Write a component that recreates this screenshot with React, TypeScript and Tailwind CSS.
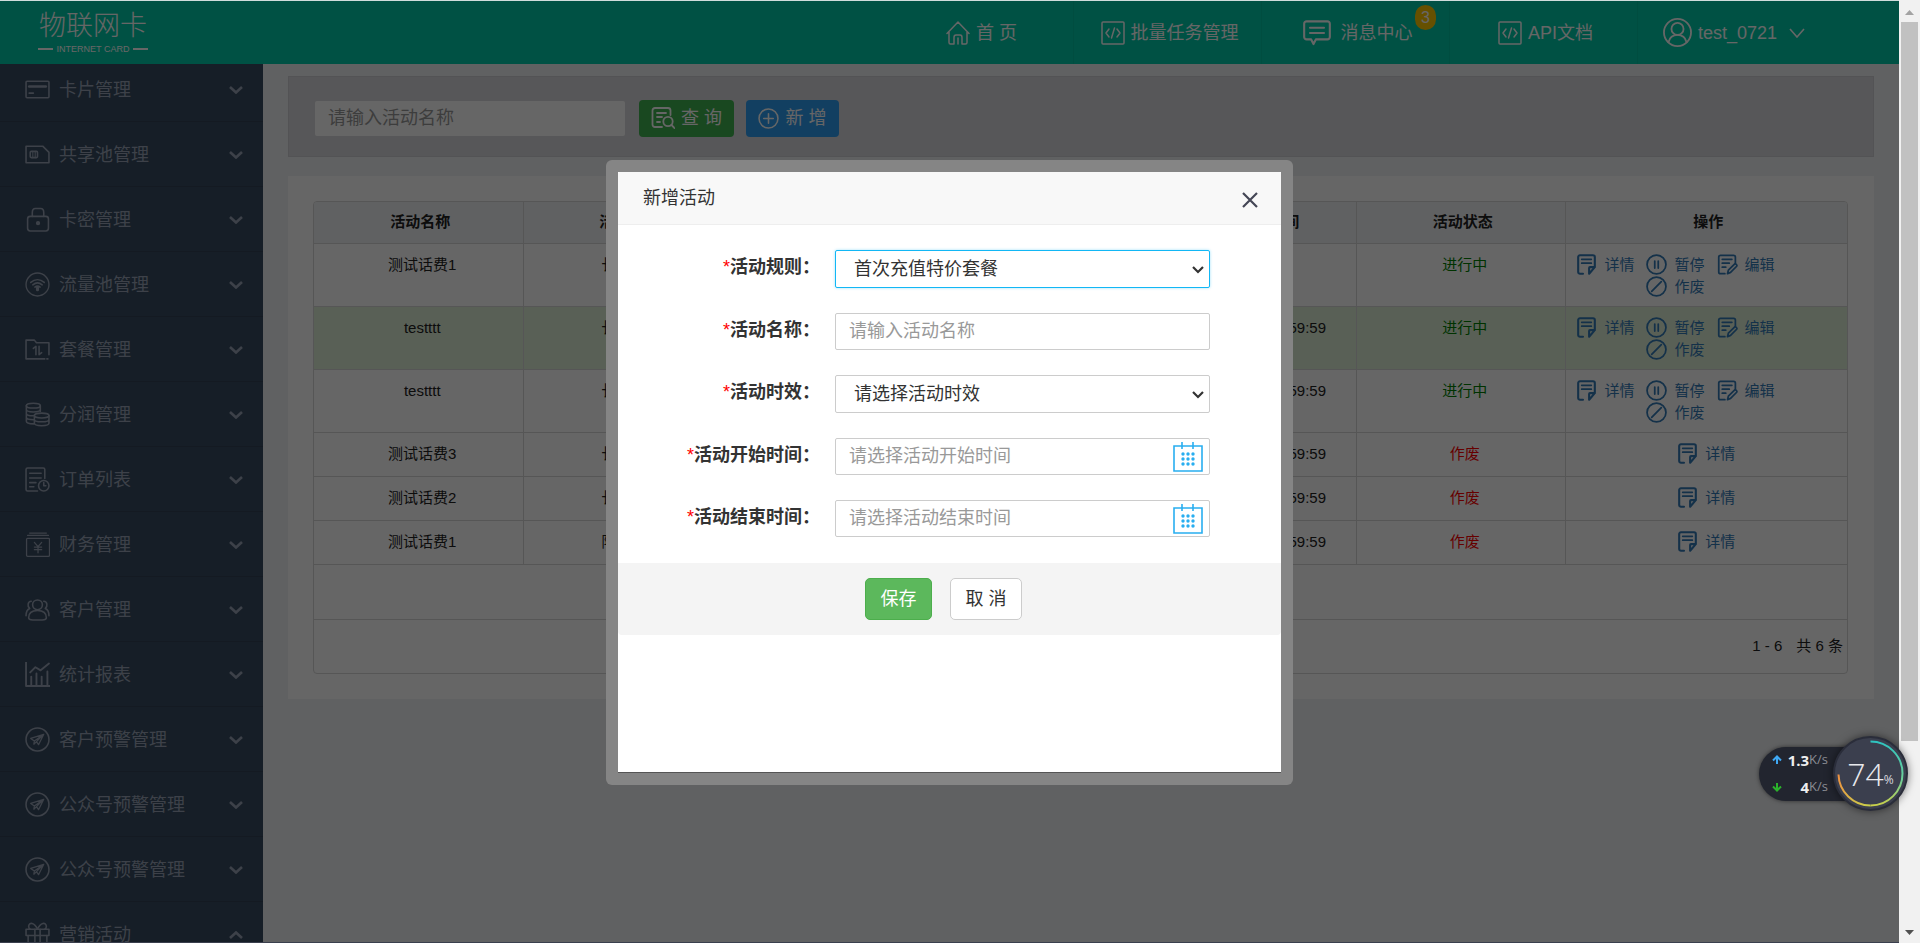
import type { ReactNode } from 'react'

const FONT = "font-['Liberation_Sans','Noto_Sans_CJK_SC',sans-serif]"

function Icon({ children, className = 'size-[25px]', width = 1.5 }: { children: ReactNode; className?: string; width?: number }) {
  return (
    <svg
      viewBox="0 0 24 24"
      fill="none"
      stroke="currentColor"
      strokeWidth={width}
      strokeLinecap="round"
      strokeLinejoin="round"
      aria-hidden="true"
      className={`shrink-0 ${className}`}
    >
      {children}
    </svg>
  )
}

const planeIcon = (
  <>
    <circle cx="12" cy="12" r="11" />
    <path d="M18 7 5.500 11l3.500 2.500L18 7l-5 10-2-3-2.500 2.500.5-3M11 14l7-7" strokeWidth="1.200" />
  </>
)

const menu: { label: string; icon: ReactNode; open?: boolean }[] = [
  {
    label: '卡片管理',
    icon: <><rect x="1" y="4" width="22" height="16" rx="1" /><path d="M4 9h16" strokeWidth="2.400" /><path d="M4 15.500h4" /></>,
  },
  {
    label: '共享池管理',
    icon: <><path d="M1 4h16l6 6v10H1z" /><rect x="5" y="9" width="7" height="6" rx="1" /><path d="M7.500 9v6M9.800 9v6" strokeWidth="1" /></>,
  },
  {
    label: '卡密管理',
    icon: <><rect x="2.500" y="9" width="20" height="14" rx="2.500" /><path d="M7 9V5.500C7 3 8 1.500 10 1.500h5c2 0 3 1.500 3 4V9" /><circle cx="12.500" cy="15.500" r="1.300" fill="currentColor" /></>,
  },
  {
    label: '流量池管理',
    icon: <><circle cx="12" cy="12" r="11" strokeWidth="1.300" /><path d="M5.500 10c4-3.500 9-3.500 13 0M7.500 12.300c3-2.500 6-2.500 9 0M9.500 14.500c1.700-1.300 3.300-1.300 5 0" /><path d="M12 15v2" strokeWidth="3" /></>,
  },
  {
    label: '套餐管理',
    icon: <><path d="M19 21H1V3h8l2 2.500h12V17" /><path d="M8 11l2.500-2v8M13.500 9v8l2.500-2M21 21h1" /></>,
  },
  {
    label: '分润管理',
    icon: <><ellipse cx="8" cy="3.500" rx="6.700" ry="2.300" /><path d="M1.300 3.500v15c0 1.500 3 2.500 7 2.500M14.700 3.500V9M1.300 7.300c0 3 13.400 3 13.400 0M1.300 11c0 2 4 2.500 7.500 2M1.300 14.700c0 1.500 3 2.300 7 2.300" /><ellipse cx="16" cy="13" rx="7" ry="2.300" /><path d="M9 13v7.500c0 3 14 3 14 0V13M9 16.700c0 3 14 3 14 0" /></>,
  },
  {
    label: '订单列表',
    icon: <><path d="M12 23H2.500c-1 0-1.500-.5-1.500-1.500v-19C1 1.500 1.500 1 2.500 1h15c1 0 1.500.5 1.500 1.500V11M4.500 6h11M4.500 10.500h11M4.500 15h6M4.500 19h4" /><circle cx="18" cy="18" r="5" /><path d="M18 15v3h2" /></>,
  },
  {
    label: '财务管理',
    icon: <><rect x="1.500" y="6" width="22" height="17.300" rx="1" strokeWidth="1.200" /><path d="M2.500 3.300h20M4.500 1h16M9 10l3.500 4L16 10M12.500 14v6M9 14.500h7M9 17h7" strokeWidth="1.200" /></>,
  },
  {
    label: '客户管理',
    icon: <><circle cx="12" cy="7.500" r="4.700" /><path d="M3.500 20c0-5 4-7 8.500-7s8.500 2 8.500 7c0 2-2 2-4 2h-9c-2 0-4 0-4-2z" /><path d="M6 4C2.500 4 2 9 4.500 11 2 12 1 14 1 18M18 4c3.500 0 4 5 1.500 7 2.500 1 3.500 3 3.500 7" /></>,
  },
  {
    label: '统计报表',
    icon: <path d="M1 0v23h23M6 22v-8M11 22V11M16 22v-8M21.500 22V9M5 10l5-5 5 3 8-6.500" strokeWidth="1.800" />,
  },
  { label: '客户预警管理', icon: planeIcon },
  { label: '公众号预警管理', icon: planeIcon },
  { label: '公众号预警管理', icon: planeIcon },
  {
    label: '营销活动',
    open: true,
    icon: <><rect x="1" y="7" width="22" height="6" /><path d="M3 13v10h18V13M9.500 7v16M14.500 7v16M12 7C9 0 4 0 3.500 4c0 1.500.5 2.500 1.500 3M12 7c3-7 8-7 8.500-3 0 1.500-.5 2.500-1.500 3" /></>,
  },
]

const codeIcon = (
  <>
    <rect x="1" y="1" width="22" height="22" rx="1" />
    <path d="M8 8l-3 4 3 4M16 8l3 4-3 4M13.500 7l-3 10" />
  </>
)

const detailIcon = (
  <>
    <path d="M8 22.500H4.500c-1 0-2-.7-2-2V3.500c0-1.300 1-2 2-2h15c1 0 2 .7 2 2V15l-6.500 7.500V16c0-.7.5-1 1-1h5.500" strokeWidth="2.400" />
    <path d="M6.500 6h11M6.500 10.500h11" />
  </>
)
const pauseIcon = (
  <>
    <circle cx="12" cy="12" r="10.800" />
    <path d="M10 8v8M14 8v8" />
  </>
)
const editIcon = (
  <>
    <path d="M9 22.500H4c-1 0-2-.7-2-2V3.500c0-1.300 1-2 2-2h15c1 0 2 .7 2 2V10M6 6h11M6 10.500h8M6 15h4" />
    <path d="M12 22.500l1-4 7-7c1-1 3.500 1 2.500 2.500l-7 7-3.500 1.500z" />
  </>
)
const voidIcon = (
  <>
    <circle cx="12" cy="12" r="10.800" />
    <path d="M6.500 17.500l11-11" />
  </>
)

const rows = [
  { name: '测试话费1', term: '长期有效', end: '', active: true },
  { name: 'testttt', term: '长期有效', end: '2021-07-31 23:59:59', active: true, selected: true },
  { name: 'testttt', term: '长期有效', end: '2021-07-31 23:59:59', active: true },
  { name: '测试话费3', term: '长期有效', end: '2021-07-31 23:59:59', active: false },
  { name: '测试话费2', term: '长期有效', end: '2021-07-31 23:59:59', active: false },
  { name: '测试话费1', term: '限时有效', end: '2021-07-31 23:59:59', active: false },
]

const columns = ['活动名称', '活动时效', '', '', '活动结束时间', '活动状态', '操作']

function NavItem({ icon, children }: { icon: ReactNode; children: ReactNode }) {
  return (
    <a href="#" className="relative flex h-full w-[188px] items-center justify-center gap-1.5 border-r border-[#00c0a1] pl-1 last:border-r-0">
      {icon}
      {children}
    </a>
  )
}

function Header() {
  return (
    <header className="flex h-[63px] shrink-0 items-center justify-between bg-[#00cbaa] pr-[73px] text-lg text-white">
      <div className="ml-[38px] flex w-[110px] flex-col items-center">
        <span className="text-[27px] leading-[32px] font-light whitespace-nowrap">物联网卡</span>
        <span className="flex w-full items-center justify-between text-[9px] leading-[14px]">
          <i className="h-0.5 w-[15px] bg-white" />
          INTERNET CARD
          <i className="h-0.5 w-[15px] bg-white" />
        </span>
      </div>
      <nav className="flex h-full">
        <NavItem icon={<Icon className="size-6"><path d="M1 12.500 12 1l11 11.500M3 11v10.500c0 1 .5 1.500 1.500 1.500H8v-6.500C8 14.500 9 14 10 14h4c1 0 2 .5 2 2.500V23h3.500c1 0 1.500-.5 1.500-1.500V11M12 17v6" /></Icon>}>
          首 页
        </NavItem>
        <NavItem icon={<Icon className="size-6">{codeIcon}</Icon>}>批量任务管理</NavItem>
        <NavItem
          icon={
            <Icon className="mr-1 size-7" width={1.800}>
              <path d="M3 2h18c1 0 2 1 2 2v11.500c0 1-1 2-2 2H11l-2 4-2-4H3c-1 0-2-1-2-2V4c0-1 1-2 2-2zM6 7.500h12M6 12h12" />
            </Icon>
          }
        >
          消息中心
          <span className="absolute top-1 right-[13px] flex h-[25px] w-[21px] items-center justify-center rounded-full bg-[#ffc800] text-base">3</span>
        </NavItem>
        <NavItem icon={<Icon className="size-6">{codeIcon}</Icon>}>API文档</NavItem>
        <NavItem
          icon={
            <Icon className="size-[29px]">
              <circle cx="12" cy="12" r="11.200" />
              <circle cx="12" cy="9" r="5" />
              <path d="M4.500 20c1-4 3-6 7.500-6s6.500 2 7.500 6" />
            </Icon>
          }
        >
          test_0721
          <svg viewBox="0 0 16 10" className="ml-1.5 h-2.5 w-4 shrink-0" fill="none" stroke="currentColor" strokeWidth="1.600" aria-hidden="true">
            <path d="M1 1l7 8 7-8" />
          </svg>
        </NavItem>
      </nav>
    </header>
  )
}

function Sidebar() {
  return (
    <aside className="w-[263px] shrink-0 overflow-hidden bg-[#394b61] text-lg text-[#98a4b6]">
      <ul className="-mt-[7px]">
        {menu.map((item, i) => (
          <li key={i}>
            <a href="#" className="flex h-[65px] items-center gap-[9px] border-b border-[#324256] pt-px pr-5 pl-[25px]">
              <Icon>{item.icon}</Icon>
              {item.label}
              <svg viewBox="0 0 14 8" className={`ml-auto h-2 w-3.5 ${item.open ? 'rotate-180' : ''}`} fill="none" stroke="currentColor" strokeWidth="2.600" aria-hidden="true">
                <path d="M1 1l6 5.500L13 1" />
              </svg>
            </a>
          </li>
        ))}
      </ul>
    </aside>
  )
}

function Action({ icon, label }: { icon: ReactNode; label: string }) {
  return (
    <a href="#" className="flex h-[22px] items-center gap-[7px] whitespace-nowrap text-[#337ab7]">
      <Icon className="size-[21px]" width={2}>{icon}</Icon>
      {label}
    </a>
  )
}

function ActivityTable() {
  return (
    <div className="overflow-hidden rounded border border-[#d6d6d6] text-[15px] leading-[22px] text-[#222]">
      <table className="w-full table-fixed border-collapse text-center">
        <thead className="bg-[#f0f2f6]">
          <tr className="h-[41px]">
            {columns.map((c, i) => (
              <th key={i} className={`border-r border-b border-[#d6d6d6] pl-1 last:border-r-0 ${i === 0 ? 'w-[209px]' : ''} ${i === 6 ? 'w-[282px]' : ''}`}>
                {c}
              </th>
            ))}
          </tr>
        </thead>
        <tbody>
          {rows.map((r, i) => (
            <tr
              key={i}
              className={`border-b border-[#d6d6d6] align-top *:border-r *:border-[#d6d6d6] *:pt-2.5 *:pl-2 *:last:border-r-0 *:last:pl-0 ${r.active ? 'h-[63px]' : 'h-11'} ${r.selected ? 'bg-[#dff0d8]' : ''}`}
            >
              <td>{r.name}</td>
              <td>{r.term}</td>
              <td />
              <td />
              <td>{r.end}</td>
              <td className={r.active ? 'text-[#008000]' : 'text-[#f00]'}>{r.active ? '进行中' : '作废'}</td>
              <td>
                {r.active ? (
                  <div className="ml-1.5 flex w-[208px] flex-wrap justify-center gap-x-3">
                    <Action icon={detailIcon} label="详情" />
                    <Action icon={pauseIcon} label="暂停" />
                    <Action icon={editIcon} label="编辑" />
                    <Action icon={voidIcon} label="作废" />
                  </div>
                ) : (
                  <div className="flex justify-center">
                    <Action icon={detailIcon} label="详情" />
                  </div>
                )}
              </td>
            </tr>
          ))}
        </tbody>
      </table>
      <div className="h-[55px] border-b border-[#d6d6d6]" />
      <div className="flex h-[53px] items-center justify-end gap-3.5 pr-1">
        <span>1 - 6</span>
        <span>共 6 条</span>
      </div>
    </div>
  )
}

function CalendarIcon() {
  return (
    <svg viewBox="0 0 30 30" className="pointer-events-none absolute top-1 right-[7px] size-[30px]" fill="none" stroke="#29aef0" strokeWidth="1.600" aria-hidden="true">
      <path d="M1 4h28v25H1zM9 0v7M20 0v7" />
      {[12, 17, 22].map((y) =>
        [10, 15, 20].map((x) => <circle key={`${x}-${y}`} cx={x} cy={y} r="1.700" fill="#29aef0" stroke="none" />)
      )}
    </svg>
  )
}

function Field({ id, label, children }: { id: string; label: string; children: ReactNode }) {
  return (
    <div className="flex">
      <label htmlFor={id} className="w-[202px] shrink-0 pt-1 text-right leading-[27px] font-bold whitespace-nowrap">
        <span className="font-normal text-[#f00]">*</span>
        {label}：
      </label>
      <div className="relative ml-[15px] w-[375px]">{children}</div>
    </div>
  )
}

function SelectChevron() {
  return (
    <svg viewBox="0 0 12 8" className="pointer-events-none absolute top-4 right-1.5 h-2 w-3" fill="none" stroke="#333" strokeWidth="2.200" aria-hidden="true">
      <path d="M1 1l5 5 5-5" />
    </svg>
  )
}

const control = 'block w-full rounded-xs border bg-white text-[#333] outline-none placeholder:text-[#999]'

function ActivityDialog() {
  return (
    <div role="dialog" aria-label="新增活动" className="flex h-[625px] w-[687px] flex-col rounded-md bg-[#858585] p-3 text-lg text-[#333]">
      <div className="flex-1 border-b border-[#555] bg-white">
        <div className="flex h-[53px] items-center justify-between rounded-t-xs border-b border-[#eee] bg-[#f8f8f8] pr-[23px] pl-[25px]">
          <h2 className="leading-[27px]">新增活动</h2>
          <button type="button" aria-label="关闭">
            <svg viewBox="0 0 16 16" className="mt-1 size-4" stroke="#444655" strokeWidth="2.200" aria-hidden="true">
              <path d="M1 1l14 14M15 1L1 15" />
            </svg>
          </button>
        </div>
        <form>
          <div className="flex flex-col gap-[25px] pt-[25px] pb-[26px]">
            <Field id="rule" label="活动规则">
              <select id="rule" className={`${control} h-[38px] appearance-none border-[#12b7f5] pl-[18px] shadow-[0_0_3px_#12b7f566]`}>
                <option>首次充值特价套餐</option>
              </select>
              <SelectChevron />
            </Field>
            <Field id="name" label="活动名称">
              <input id="name" placeholder="请输入活动名称" className={`${control} h-[37px] border-[#ccc] pl-[13px]`} />
            </Field>
            <Field id="term" label="活动时效">
              <select id="term" className={`${control} h-[38px] appearance-none border-[#ccc] pl-[18px]`}>
                <option>请选择活动时效</option>
              </select>
              <SelectChevron />
            </Field>
            <Field id="start" label="活动开始时间">
              <input id="start" placeholder="请选择活动开始时间" className={`${control} h-[37px] border-[#ccc] pl-[13px]`} />
              <CalendarIcon />
            </Field>
            <Field id="end" label="活动结束时间">
              <input id="end" placeholder="请选择活动结束时间" className={`${control} h-[37px] border-[#ccc] pl-[13px]`} />
              <CalendarIcon />
            </Field>
          </div>
          <div className="flex h-[72px] items-center justify-center gap-[18px] rounded-b bg-[#f4f4f4] pr-3">
            <button type="button" className="h-[42px] w-[67px] rounded-[5px] border border-[#4cae4c] bg-[#5cb85c] text-white">
              保存
            </button>
            <button type="button" className="h-[42px] w-[72px] rounded-[5px] border border-[#ccc] bg-white">
              取 消
            </button>
          </div>
        </form>
      </div>
    </div>
  )
}

function Speed({ up, value }: { up?: boolean; value: string }) {
  return (
    <div className="flex h-[27px] items-center">
      <svg viewBox="0 0 10 10" className={`size-2.5 ${up ? 'text-[#3fa9f5]' : 'rotate-180 text-[#2bb32b]'}`} fill="none" stroke="currentColor" strokeWidth="2" aria-hidden="true">
        <path d="M1 5.500l4-4 4 4M5 2v7" />
      </svg>
      <span className="ml-auto text-[15px] font-bold text-[#eee]">{value}</span>
      <span className="text-[13px] text-[#8b8d94]">K/s</span>
    </div>
  )
}

// floating network monitor, pinned over the page
function NetMonitor() {
  return (
    <div className="absolute right-3 bottom-[132px] flex h-[75px] w-[149px] items-center font-['Open_Sans',sans-serif]">
      <div className="h-[54px] w-[100px] rounded-l-full bg-[#22252f] pr-[31px] pl-[13px] shadow-[0_0_4px_#0008]">
        <Speed up value="1.3" />
        <Speed value="4" />
      </div>
      <div className="absolute right-0 flex size-[75px] items-center justify-center rounded-full border-2 border-[#2a2d3a] bg-[#3b3f4e] shadow-[0_0_8px_#0008]">
        <svg viewBox="0 0 75 75" className="absolute -inset-0.5 size-[75px]" fill="none" strokeWidth="2" aria-hidden="true">
          <defs>
            <linearGradient id="ringRight" x1="0" y1="0" x2="0" y2="1">
              <stop offset="0" stopColor="#2ec4c0" />
              <stop offset="0.6" stopColor="#6fcf97" />
              <stop offset="1" stopColor="#c8cf4a" />
            </linearGradient>
            <linearGradient id="ringLeft" x1="0" y1="0" x2="1" y2="1">
              <stop offset="0" stopColor="#f09040" />
              <stop offset="1" stopColor="#c8cf4a" />
            </linearGradient>
          </defs>
          <path d="M37.500 5.500a32 32 0 0 1 0 64" stroke="url(#ringRight)" />
          <path d="M37.500 69.500a32 32 0 0 1-32-31" stroke="url(#ringLeft)" />
        </svg>
        <span className="text-[32px] leading-none font-light text-[#e8e8ec]">74</span>
        <span className="mt-3 text-xs text-[#d8d8de]">%</span>
      </div>
    </div>
  )
}

function Scrollbar() {
  return (
    <div className="flex w-[21px] shrink-0 flex-col items-center bg-[#f1f1f1]" aria-hidden="true">
      <svg viewBox="0 0 21 22" className="h-[22px] w-[21px] shrink-0">
        <path d="M6 15h9l-4.500-5z" fill="#a3a3a3" />
      </svg>
      <div className="min-h-0 w-full flex-1 px-0.5">
        <div className="h-4/5 bg-[#c1c1c1]" />
      </div>
      <svg viewBox="0 0 21 22" className="h-[22px] w-[21px] shrink-0">
        <path d="M6 9h9l-4.500 5z" fill="#505050" />
      </svg>
    </div>
  )
}

export default function App() {
  return (
    <div className={`relative flex h-screen overflow-hidden ${FONT}`}>
      <div className="flex min-w-0 flex-1 flex-col border-t border-b border-t-[#d0dcdc] border-b-[#3a3f4d]">
        <div className="relative flex min-h-0 flex-1 flex-col">
          <Header />
          <div className="flex min-h-0 flex-1">
            <Sidebar />
            <main className="min-w-0 flex-1 bg-[#f0f2f6] px-[25px] pt-3">
              <form className="flex h-[81px] items-center border border-[#cfcfd4] bg-[#d9d9de] pt-[3px] pl-[26px] text-lg">
                <input
                  aria-label="活动名称"
                  placeholder="请输入活动名称"
                  className="h-[35px] w-[310px] rounded-xs bg-white pl-[13px] placeholder:text-[#999]"
                />
                <button type="button" className="ml-3.5 flex h-[37px] w-[95px] items-center justify-center gap-1.5 rounded bg-[#3fb350] text-white">
                  <Icon className="size-6" width={1.800}>
                    <path d="M11 21H4c-1.500 0-2.500-1-2.500-2.500v-14C1.500 3 2.500 2 4 2h13c1.500 0 2.500 1 2.500 2.500V9M6 7h9M6 11h5M6 16h3" />
                    <circle cx="17" cy="15.500" r="4.700" />
                    <path d="M20.500 19l3 3" />
                  </Icon>
                  查 询
                </button>
                <button type="button" className="ml-3 flex h-[37px] w-[93px] items-center justify-center gap-1.5 rounded bg-[#2d9ef2] text-white">
                  <Icon className="size-[21px]" width={1.800}>
                    <circle cx="12" cy="12" r="10.800" />
                    <path d="M12 6.500v11M6.500 12h11" />
                  </Icon>
                  新 增
                </button>
              </form>
              <section className="mt-[19px] bg-white py-[25px] pr-[26px] pl-[25px]">
                <ActivityTable />
              </section>
            </main>
          </div>
          <div className="absolute inset-0 flex items-center justify-center bg-black/60 pt-0.5">
            <ActivityDialog />
          </div>
        </div>
      </div>
      <Scrollbar />
      <NetMonitor />
    </div>
  )
}
